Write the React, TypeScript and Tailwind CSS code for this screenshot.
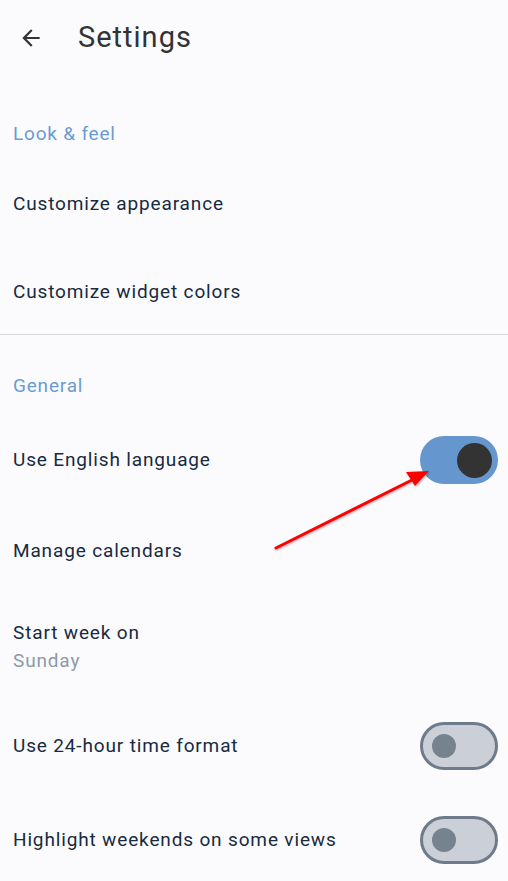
const font = { fontFamily: "Roboto, 'Noto Sans', sans-serif" };

function Toggle({ on }: { on: boolean }) {
  if (on) {
    return (
      <div className="flex h-[48px] w-[78px] shrink-0 items-center justify-end rounded-full bg-[#6696ce] pr-[6px]">
        <div className="h-[35px] w-[35px] rounded-full bg-[#333333]" />
      </div>
    );
  }
  return (
    <div className="flex h-[48px] w-[78px] shrink-0 items-center rounded-full border-[3px] border-[#6f7b8a] bg-[#cbd0d8] pl-[9px]">
      <div className="h-[24px] w-[24px] rounded-full bg-[#76838f]" />
    </div>
  );
}

function Row({
  label,
  sub,
  toggle,
  height,
}: {
  label: string;
  sub?: string;
  toggle?: boolean;
  height: string;
}) {
  return (
    <div className={`flex items-center justify-between pl-[13px] pr-[10px] pt-[2px] ${height}`}>
      <div className="flex flex-col tracking-[0.85px]">
        <span className="text-[19px] leading-[28px] text-[#172a40]">{label}</span>
        {sub && <span className="text-[19px] leading-[28px] text-[#8d99a8]">{sub}</span>}
      </div>
      {toggle !== undefined && <Toggle on={toggle} />}
    </div>
  );
}

function SectionLabel({ text, className }: { text: string; className: string }) {
  return (
    <div className={`flex h-[50px] items-center pl-[13px] pt-[2px] text-[19px] tracking-[0.8px] text-[#6a9bd2] ${className}`}>
      {text}
    </div>
  );
}

export default function App() {
  return (
    <div className="relative h-[881px] w-[508px] overflow-hidden bg-[#fbfbfe]" style={font}>
      {/* Top bar */}
      <div className="flex h-[74px] items-center pt-[2px]">
        <svg className="ml-[18px] h-[26px] w-[26px]" viewBox="0 0 24 24" fill="#333333">
          <path d="M20 11H7.83l5.59-5.59L12 4l-8 8 8 8 1.41-1.41L7.83 13H20v-2z" />
        </svg>
        <span className="ml-[34px] text-[29px] tracking-[1px] text-[#333333]">Settings</span>
      </div>

      <SectionLabel text="Look & feel" className="mt-[34px]" />
      <Row label="Customize appearance" height="h-[90px]" />
      <Row label="Customize widget colors" height="h-[86px]" />

      <div className="h-px bg-[#d9d9de]" />

      <SectionLabel text="General" className="mt-[25px]" />
      <Row label="Use English language" toggle={true} height="h-[98px]" />
      <Row label="Manage calendars" height="h-[84px]" />
      <Row label="Start week on" sub="Sunday" height="h-[108px]" />
      <Row label="Use 24-hour time format" toggle={false} height="h-[90px]" />
      <Row label="Highlight weekends on some views" toggle={false} height="h-[98px]" />

      {/* Annotation arrow */}
      <svg className="pointer-events-none absolute left-0 top-0" width="508" height="881">
        <defs>
          <filter id="sh" x="-10%" y="-10%" width="120%" height="120%">
            <feDropShadow dx="1" dy="1" stdDeviation="1" floodColor="#000" floodOpacity="0.3" />
          </filter>
        </defs>
        <g filter="url(#sh)">
          <line x1="276" y1="548" x2="418" y2="477" stroke="#ff0000" strokeWidth="3" strokeLinecap="round" />
          <polygon points="429,471 406,472 415,486" fill="#ff0000" />
        </g>
      </svg>
    </div>
  );
}
